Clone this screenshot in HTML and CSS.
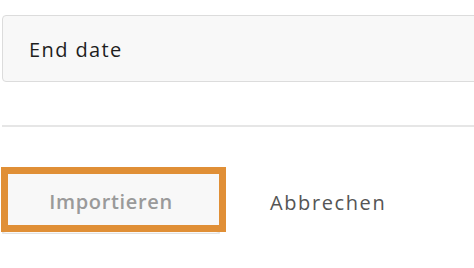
FILE: index.html
```html
<!DOCTYPE html>
<html>
<head>
<meta charset="utf-8">
<link rel="stylesheet" href="styles.css">
</head>
<body>
<div class="page">
  <div class="field"><span class="field-text">End date</span></div>
  <hr class="divider">
  <div class="actions">
    <div class="btn-wrap">
      <button class="btn-import">Importieren</button>
      <span class="focus-ring"></span>
    </div>
    <button class="btn-cancel">Abbrechen</button>
  </div>
</div>
</body>
</html>
```
FILE: styles.css
```css
html, body {
  margin: 0;
  padding: 0;
  background: #ffffff;
  overflow: hidden;
}
.page {
  padding: 15px 0 0 2px;
  width: 520px;
  font-family: "Open Sans", "Liberation Sans", sans-serif;
}
.field {
  box-sizing: border-box;
  height: 67px;
  border: 1px solid #dcdcdc;
  border-radius: 4px;
  background: #f8f8f8;
  display: flex;
  align-items: center;
  padding-left: 26px;
  padding-top: 2px;
}
.field-text {
  font-size: 20px;
  letter-spacing: 1.4px;
  color: #1e1e1e;
}
.divider {
  border: 0;
  height: 2px;
  background: #e6e6e6;
  margin: 43px 0 0 0;
}
.actions {
  display: flex;
  align-items: center;
  margin-top: 41px;
}
.btn-wrap {
  position: relative;
  width: 218px;
  height: 66px;
}
.btn-import {
  box-sizing: border-box;
  width: 218px;
  height: 66px;
  border: 1px solid #e2e2e2;
  border-radius: 4px;
  background: #f8f8f8;
  box-shadow: 0 2px 0 #e6e6e6;
  font-family: inherit;
  font-size: 20px;
  font-weight: 600;
  letter-spacing: 0.65px;
  color: #9a9a9a;
  padding: 0;
}
.focus-ring {
  position: absolute;
  left: -1px;
  top: -1px;
  width: 225px;
  height: 65px;
  box-sizing: border-box;
  border: 7px solid #e08f36;
}
.btn-cancel {
  margin-left: 50px;
  margin-top: 3px;
  border: 0;
  background: none;
  padding: 0;
  font-family: inherit;
  font-size: 20px;
  letter-spacing: 1.6px;
  color: #555555;
}
```
